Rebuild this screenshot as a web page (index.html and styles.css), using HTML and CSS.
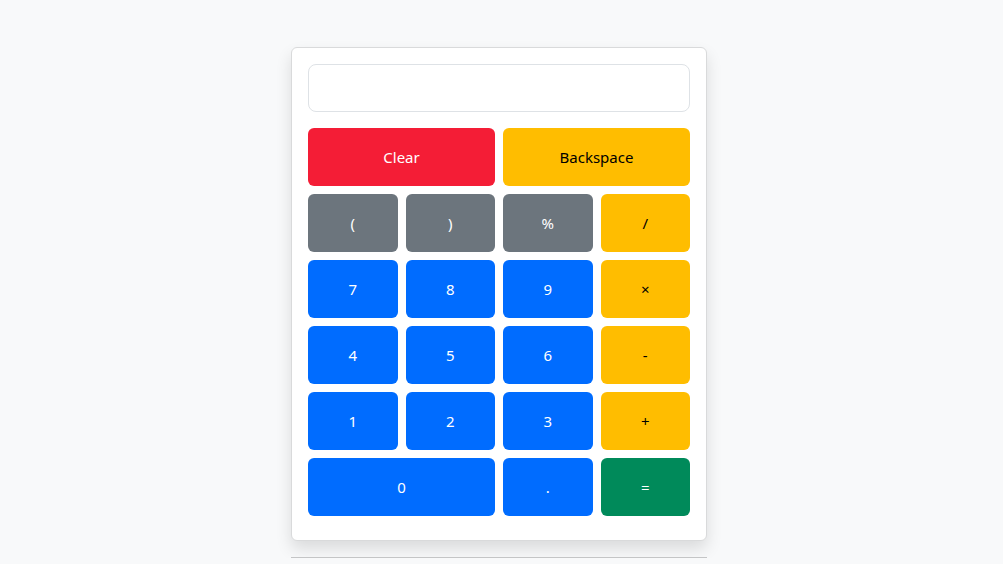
FILE: index.html
```html
<!DOCTYPE html>
<html lang="en">
<head>
<meta charset="utf-8">
<title>Calculator</title>
<link rel="stylesheet" href="styles.css">
</head>
<body>
<div class="page">
  <div class="wrap">
    <div class="card">
      <input class="display" type="text" readonly>
      <div class="keys">
        <button class="btn red span2">Clear</button>
        <button class="btn yellow span2">Backspace</button>
        <button class="btn gray">(</button>
        <button class="btn gray">)</button>
        <button class="btn gray">%</button>
        <button class="btn yellow">/</button>
        <button class="btn blue">7</button>
        <button class="btn blue">8</button>
        <button class="btn blue">9</button>
        <button class="btn yellow">×</button>
        <button class="btn blue">4</button>
        <button class="btn blue">5</button>
        <button class="btn blue">6</button>
        <button class="btn yellow">-</button>
        <button class="btn blue">1</button>
        <button class="btn blue">2</button>
        <button class="btn blue">3</button>
        <button class="btn yellow">+</button>
        <button class="btn blue span2">0</button>
        <button class="btn blue">.</button>
        <button class="btn green">=</button>
      </div>
    </div>
    <hr class="rule">
  </div>
</div>
</body>
</html>
```

FILE: styles.css
```css
html, body {
  margin: 0;
  padding: 0;
  background: #f8f9fa;
  font-family: "Noto Sans", "Open Sans", "Liberation Sans", sans-serif;
  color: #212529;
}
.page {
  display: flex;
  justify-content: center;
  padding-right: 5px;
  padding-top: 47px;
}
.wrap {
  width: 416px;
}
.card {
  background: #fff;
  border: 1px solid #d9dadb;
  border-radius: 6px;
  box-shadow: 0 8px 16px rgba(0, 0, 0, 0.12);
  padding: 16px 16px 24px;
  box-sizing: border-box;
}
.display {
  display: block;
  width: 100%;
  height: 48px;
  box-sizing: border-box;
  border: 1px solid #dee2e6;
  border-radius: 8px;
  background: #fff;
  margin: 0 0 16px;
  padding: 8px 16px;
  font-size: 20px;
  text-align: right;
  font-family: inherit;
  outline: none;
}
.keys {
  display: grid;
  grid-template-columns: repeat(4, 1fr);
  gap: 8px;
}
.btn {
  height: 58px;
  border: 1px solid transparent;
  border-radius: 6px;
  font-family: inherit;
  font-size: 15px;
  color: #fff;
  padding: 0;
}
.span2 { grid-column: span 2; }
.red { background: #f41d36; }
.yellow { background: #ffbd00; color: #000; }
.gray { background: #6c757d; }
.blue { background: #006cff; }
.green { background: #008a5a; }
.rule {
  border: 0;
  border-top: 1px solid #c4c5c6;
  margin: 16px 0 0;
}
```
